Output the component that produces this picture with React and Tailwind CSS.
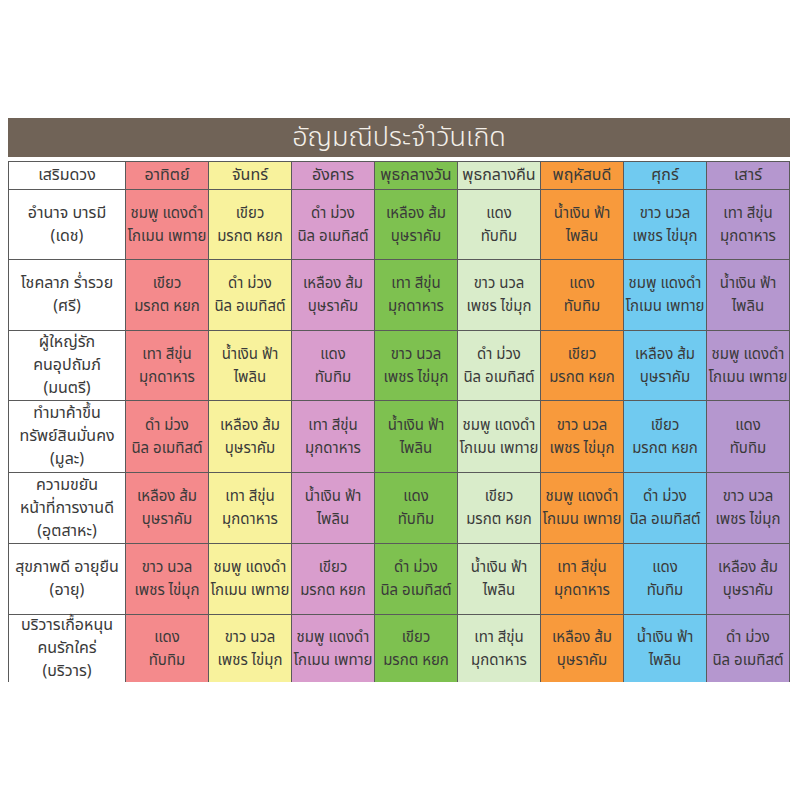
import React from "react";

const cols = [
  { name: "อาทิตย์", bg: "bg-[#f48a8c]" },
  { name: "จันทร์", bg: "bg-[#f8f29c]" },
  { name: "อังคาร", bg: "bg-[#d99dcd]" },
  { name: "พุธกลางวัน", bg: "bg-[#7ec150]" },
  { name: "พุธกลางคืน", bg: "bg-[#d9ecca]" },
  { name: "พฤหัสบดี", bg: "bg-[#f89a3c]" },
  { name: "ศุกร์", bg: "bg-[#70caf0]" },
  { name: "เสาร์", bg: "bg-[#b597cf]" },
];

const G = {
  pink: ["ชมพู แดงดำ", "โกเมน เพทาย"],
  green: ["เขียว", "มรกต หยก"],
  black: ["ดำ ม่วง", "นิล อเมทิสต์"],
  yellow: ["เหลือง ส้ม", "บุษราคัม"],
  red: ["แดง", "ทับทิม"],
  blue: ["น้ำเงิน ฟ้า", "ไพลิน"],
  white: ["ขาว นวล", "เพชร ไข่มุก"],
  grey: ["เทา สีขุ่น", "มุกดาหาร"],
};

const rows = [
  { label: ["อำนาจ บารมี", "(เดช)"], cells: ["pink", "green", "black", "yellow", "red", "blue", "white", "grey"] },
  { label: ["โชคลาภ ร่ำรวย", "(ศรี)"], cells: ["green", "black", "yellow", "grey", "white", "red", "pink", "blue"] },
  { label: ["ผู้ใหญ่รัก", "คนอุปถัมภ์", "(มนตรี)"], cells: ["grey", "blue", "red", "white", "black", "green", "yellow", "pink"] },
  { label: ["ทำมาค้าขึ้น", "ทรัพย์สินมั่นคง", "(มูละ)"], cells: ["black", "yellow", "grey", "blue", "pink", "white", "green", "red"] },
  { label: ["ความขยัน", "หน้าที่การงานดี", "(อุตสาหะ)"], cells: ["yellow", "grey", "blue", "red", "green", "pink", "black", "white"] },
  { label: ["สุขภาพดี อายุยืน", "(อายุ)"], cells: ["white", "pink", "green", "black", "blue", "grey", "red", "yellow"] },
  { label: ["บริวารเกื้อหนุน", "คนรักใคร่", "(บริวาร)"], cells: ["red", "white", "pink", "green", "grey", "yellow", "blue", "black"] },
];

export default function App() {
  return (
    <div
      className="w-[800px] h-[800px] bg-white pt-[118px] pl-[8px] text-[#3a3a3a]"
      style={{ fontFamily: '"Noto Sans Thai", "Noto Sans Thai Looped", Tahoma, "Noto Sans", sans-serif' }}
    >
      <div className="w-[782px] h-[39px] bg-[#706357] flex items-center justify-center text-[#f4f0ea] text-[27px] font-light leading-none">
        อัญมณีประจำวันเกิด
      </div>
      <div className="mt-[4px] grid grid-cols-[117px_repeat(8,83px)] grid-rows-[28px_70px_71px_70px_72px_71px_71px_67px] border-l border-t border-[#5a5a5a] w-[782px] text-[15px] leading-[23px]">
        <div className="bg-white border-r border-b border-[#5a5a5a] flex items-center justify-center text-[16px]">เสริมดวง</div>
        {cols.map((c) => (
          <div key={c.name} className={`${c.bg} border-r border-b border-[#5a5a5a] flex items-center justify-center whitespace-nowrap text-[16px]`}>
            {c.name}
          </div>
        ))}
        {rows.map((r, ri) => (
          <React.Fragment key={ri}>
            <div className={`bg-white border-r border-[#5a5a5a] ${ri < rows.length - 1 ? "border-b" : ""} flex flex-col items-center justify-center text-center whitespace-nowrap text-[16px]`}>
              {r.label.map((l) => (
                <span key={l}>{l}</span>
              ))}
            </div>
            {r.cells.map((g, ci) => (
              <div
                key={ci}
                className={`${cols[ci].bg} border-r border-[#5a5a5a] ${ri < rows.length - 1 ? "border-b" : ""} flex flex-col items-center justify-center text-center whitespace-nowrap`}
              >
                <span>{G[g][0]}</span>
                <span>{G[g][1]}</span>
              </div>
            ))}
          </React.Fragment>
        ))}
      </div>
    </div>
  );
}
